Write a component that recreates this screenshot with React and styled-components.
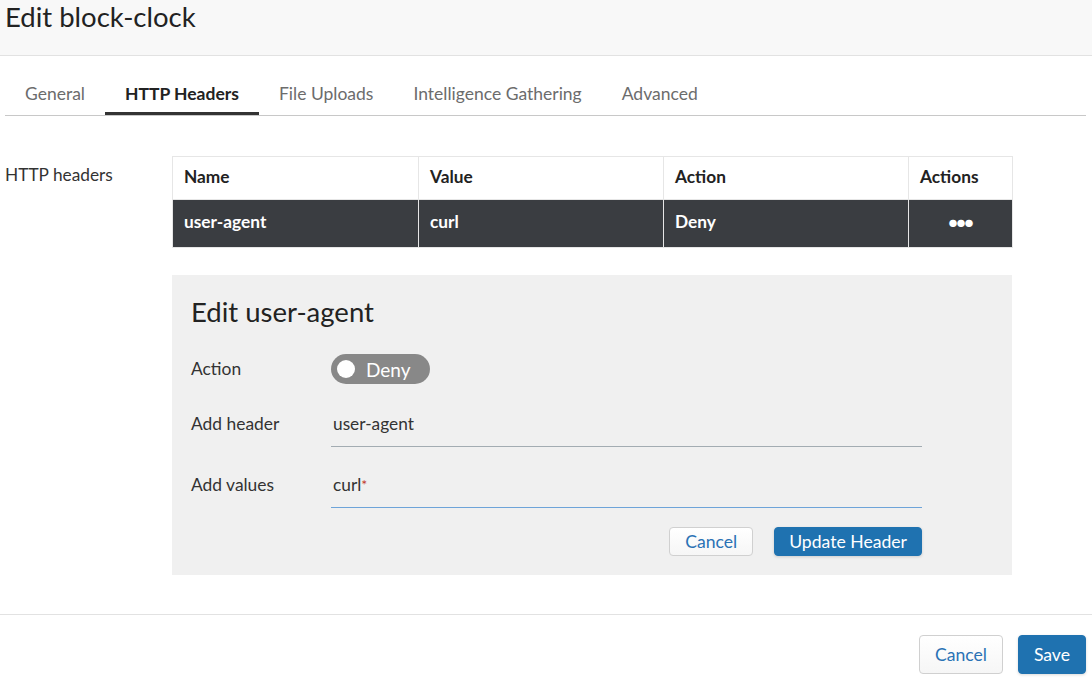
import React from 'react';
import styled, { createGlobalStyle } from 'styled-components';

/* Styles */
const GlobalStyle = createGlobalStyle`
  body {
    margin: 0;
    background: #ffffff;
    font-family: Lato, "Open Sans", "Liberation Sans", sans-serif;
    color: #333;
  }
`
const Page = styled.div`
  width: 1092px;
  height: 682px;
  overflow: hidden;
`
const Header = styled.header`
  height: 55px;
  box-sizing: content-box;
  background: #f8f8f8;
  border-bottom: 1px solid #e2e2e2;
  padding: 0 5px;
`
const Title = styled.h1`
  margin: 0;
  font-weight: normal;
  font-size: 27.5px;
  line-height: 33px;
  color: #222;
`
const TabList = styled.nav`
  display: flex;
  margin: 13px 6px 0 5px;
  border-bottom: 1px solid #c8c8c8;
`
const Tab = styled.div`
  padding: 14px 20px 7px 20px;
  line-height: 22px;
  font-size: 17.5px;
  border-bottom: 3px solid ${p => (p.$active ? '#333' : 'transparent')};
  color: ${p => (p.$active ? '#222' : '#6c6c6c')};
  font-weight: ${p => (p.$active ? 'bold' : 'normal')};
`
const Body = styled.div`
  display: flex;
  padding: 40px 0 0 5px;
`
const SideLabel = styled.div`
  width: 167px;
  font-size: 17.3px;
  line-height: 20px;
  padding-top: 9px;
  color: #333;
`
const Main = styled.div`
  width: 840px;
`
const Table = styled.table`
  width: 840px;
  table-layout: fixed;
  border-collapse: collapse;
  font-size: 17.3px;
`
const HeadCell = styled.th`
  text-align: left;
  font-weight: bold;
  color: #222;
  height: 43px;
  box-sizing: border-box;
  padding: 0 11px 3px 11px;
  border: 1px solid #e6e6e6;
  width: ${p => p.$w}px;
`
const Row = styled.tr`
  background: #3a3d41;
`
const Cell = styled.td`
  height: 48px;
  box-sizing: border-box;
  padding: 0 11px 4px 11px;
  color: #fff;
  font-weight: bold;
  border: 1px solid #e6e6e6;
  border-top: none;
  text-align: ${p => (p.$center ? 'center' : 'left')};
  font-size: ${p => (p.$center ? '15px' : 'inherit')};
  letter-spacing: ${p => (p.$center ? '-1px' : '0')};
`
const Panel = styled.section`
  margin-top: 27px;
  background: #f0f0f0;
  padding: 21px 19px 19px 19px;
`
const PanelTitle = styled.h2`
  margin: 0;
  font-weight: normal;
  font-size: 27.5px;
  line-height: 32px;
  color: #222;
`
const Form = styled.div`
  width: 731px;
  display: flex;
  flex-direction: column;
`
const FieldRow = styled.div`
  display: flex;
  align-items: ${p => (p.$center ? 'center' : 'flex-start')};
  margin-top: ${p => p.$mt}px;
`
const Label = styled.div`
  width: 140px;
  font-size: 17.4px;
  line-height: 20px;
  padding-top: ${p => (p.$center ? 0 : 4)}px;
  color: #333;
`
const Toggle = styled.div`
  width: 99px;
  height: 30px;
  border-radius: 15px;
  background: #888;
  display: flex;
  align-items: center;
  box-sizing: border-box;
  padding-left: 6px;
  gap: 11px;
  color: #fff;
  font-size: 19px;
`
const Knob = styled.span`
  width: 18px;
  height: 18px;
  border-radius: 50%;
  background: #fff;
`
const Input = styled.div`
  flex: 1;
  font-size: 17.3px;
  line-height: 20px;
  padding: 4px 2px 12px 2px;
  color: #333;
  border-bottom: 1px solid ${p => (p.$focus ? '#6ea4d9' : '#a3acb2')};
`
const Star = styled.span`
  color: #c0392b;
  font-size: 14px;
  vertical-align: top;
`
const Buttons = styled.div`
  display: flex;
  justify-content: flex-end;
  gap: ${p => p.$gap}px;
  margin-top: ${p => p.$mt || 0}px;
`
const Button = styled.button`
  font-family: inherit;
  font-size: 17.6px;
  height: ${p => p.$h}px;
  padding: 0 ${p => p.$px}px;
  border-radius: 4px;
  cursor: pointer;
  border: 1px solid ${p => (p.$primary ? '#1f72b0' : '#d0d0d0')};
  background: ${p => (p.$primary ? '#1f72b0' : 'linear-gradient(#ffffff, #f6f6f6)')};
  color: ${p => (p.$primary ? '#fff' : '#2a72b5')};
  box-shadow: ${p => (p.$primary ? '0 1px 3px rgba(0,0,0,0.15)' : 'none')};
`
const Footer = styled.footer`
  margin-top: 39px;
  border-top: 1px solid #e2e2e2;
  padding: 20px 6px 0 0;
`

const tabs = ['General', 'HTTP Headers', 'File Uploads', 'Intelligence Gathering', 'Advanced']

function App() {
  return (
    <Page>
      <GlobalStyle />
      <Header>
        <Title>Edit block-clock</Title>
      </Header>
      <TabList>
        {tabs.map(t => (
          <Tab key={t} $active={t === 'HTTP Headers'}>{t}</Tab>
        ))}
      </TabList>
      <Body>
        <SideLabel>HTTP headers</SideLabel>
        <Main>
          <Table>
            <thead>
              <tr>
                <HeadCell $w={246}>Name</HeadCell>
                <HeadCell $w={245}>Value</HeadCell>
                <HeadCell $w={245}>Action</HeadCell>
                <HeadCell $w={104}>Actions</HeadCell>
              </tr>
            </thead>
            <tbody>
              <Row>
                <Cell>user-agent</Cell>
                <Cell>curl</Cell>
                <Cell>Deny</Cell>
                <Cell $center>●●●</Cell>
              </Row>
            </tbody>
          </Table>
          <Panel>
            <PanelTitle>Edit user-agent</PanelTitle>
            <Form>
              <FieldRow $center $mt={26}>
                <Label $center>Action</Label>
                <Toggle><Knob />Deny</Toggle>
              </FieldRow>
              <FieldRow $mt={26}>
                <Label>Add header</Label>
                <Input>user-agent</Input>
              </FieldRow>
              <FieldRow $mt={24}>
                <Label>Add values</Label>
                <Input $focus>curl<Star>*</Star></Input>
              </FieldRow>
              <Buttons $gap={21} $mt={19}>
                <Button $h={29} $px={15}>Cancel</Button>
                <Button $primary $h={29} $px={14}>Update Header</Button>
              </Buttons>
            </Form>
          </Panel>
        </Main>
      </Body>
      <Footer>
        <Buttons $gap={15}>
          <Button $h={39} $px={15}>Cancel</Button>
          <Button $primary $h={39} $px={15}>Save</Button>
        </Buttons>
      </Footer>
    </Page>
  )
}

export default App
